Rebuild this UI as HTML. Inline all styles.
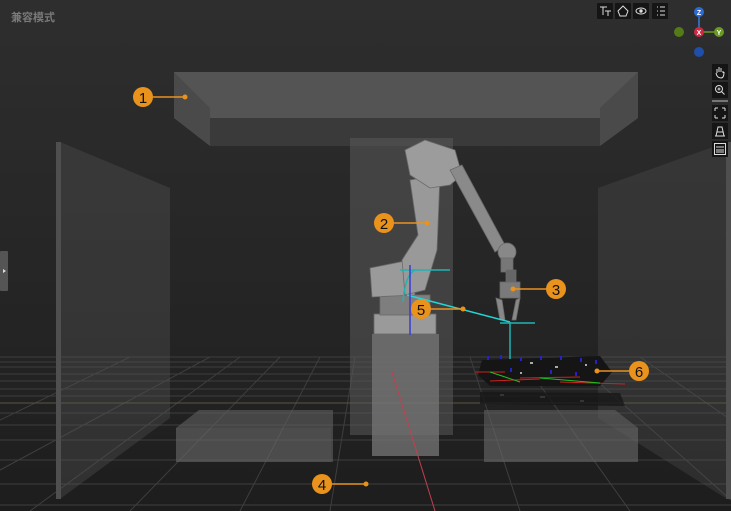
<!DOCTYPE html>
<html><head><meta charset="utf-8"><style>
html,body{margin:0;padding:0;width:731px;height:511px;overflow:hidden;background:#262626}
svg{display:block}
.t{font-family:"Liberation Sans","Noto Sans CJK SC",sans-serif}
</style></head><body>
<svg width="731" height="511" viewBox="0 0 731 511" xmlns="http://www.w3.org/2000/svg">
<defs>
<linearGradient id="bg" x1="0" y1="0" x2="0" y2="1">
<stop offset="0" stop-color="#2e2e2e"/><stop offset="0.7" stop-color="#232323"/><stop offset="1" stop-color="#1d1d1d"/>
</linearGradient>
</defs>
<rect width="731" height="511" fill="url(#bg)"/>
<!-- floor grid -->
<g stroke="#3e3e3e" stroke-width="1" fill="none">
<line x1="0" y1="357" x2="731" y2="357"/><line x1="0" y1="362" x2="731" y2="362"/>
<line x1="0" y1="367" x2="731" y2="367"/><line x1="0" y1="374" x2="731" y2="374"/>
<line x1="0" y1="381" x2="731" y2="381"/><line x1="0" y1="389" x2="731" y2="389"/>
<line x1="0" y1="396" x2="731" y2="396"/><line x1="0" y1="413" x2="731" y2="413"/>
<line x1="0" y1="425" x2="731" y2="425"/><line x1="0" y1="440" x2="731" y2="440"/>
<line x1="0" y1="460" x2="731" y2="460"/><line x1="0" y1="484" x2="731" y2="484"/>
<line x1="0" y1="505" x2="731" y2="505"/>
<line x1="0" y1="470" x2="210" y2="357"/><line x1="30" y1="511" x2="240" y2="357"/>
<line x1="0" y1="420" x2="130" y2="357"/><line x1="130" y1="511" x2="280" y2="357"/>
<line x1="240" y1="511" x2="320" y2="357"/><line x1="330" y1="511" x2="355" y2="357"/>
<line x1="520" y1="511" x2="470" y2="357"/><line x1="630" y1="511" x2="520" y2="357"/>
<line x1="731" y1="500" x2="570" y2="357"/><line x1="731" y1="420" x2="640" y2="357"/>
</g>
<line x1="0" y1="403" x2="731" y2="403" stroke="#5a5640" stroke-width="1"/>
<!-- left wall -->
<polygon points="60,142 170,188 170,418 60,499" fill="#555" opacity="0.35"/>
<rect x="56" y="142" width="5" height="357" fill="#4f4f4f"/>
<!-- right wall -->
<polygon points="598,188 727,142 727,499 598,418" fill="#555" opacity="0.3"/>
<rect x="726" y="142" width="5" height="357" fill="#4f4f4f"/>
<!-- top beam -->
<polygon points="174,72 638,72 638,118 600,146 210,146 174,118" fill="#3a3a3b"/>
<rect x="174" y="72" width="464" height="46" fill="#545454"/>
<polygon points="174,72 210,108 210,146 174,118" fill="#4a4a4a"/>
<polygon points="638,72 600,108 600,146 638,118" fill="#4a4a4a"/>
<!-- center pillar -->
<rect x="350" y="138" width="103" height="297" fill="#5a5a5a" opacity="0.55"/>
<!-- floor boxes -->
<g opacity="0.6">
<polygon points="176,428 199,410 333,410 333,462 176,462" fill="#606060"/>
<rect x="176" y="428" width="155" height="34" fill="#6a6a6a"/>
<polygon points="484,410 615,410 638,428 638,462 484,462" fill="#606060"/>
<rect x="484" y="428" width="154" height="34" fill="#6a6a6a"/>
</g>
<!-- robot base pillar -->
<rect x="372" y="334" width="67" height="122" fill="#777" opacity="0.75"/>
<!-- robot -->
<g fill="#8e8e8e" stroke="#6a6a6a" stroke-width="0.8">
<rect x="374" y="314" width="62" height="20" fill="#9a9a9a"/>
<rect x="380" y="295" width="50" height="20" fill="#7e7e7e"/>
<polygon points="370,268 410,260 415,295 372,297" fill="#9a9a9a"/>
<polygon points="410,180 440,175 437,250 425,290 405,295 402,260 418,235" fill="#999"/>
<polygon points="405,150 425,140 455,150 462,175 450,185 430,188 410,175" fill="#9c9c9c"/>
<polygon points="450,170 462,165 505,245 495,252" fill="#8a8a8a"/>
<circle cx="507" cy="252" r="9" fill="#888"/>
<rect x="501" y="258" width="12" height="14" fill="#777"/>
<rect x="500" y="282" width="20" height="16" fill="#7a7a7a"/>
<rect x="506" y="270" width="10" height="12" fill="#666"/>
<polygon points="496,298 500,320 505,320 502,300" fill="#888"/>
<polygon points="520,298 516,320 512,320 516,300" fill="#888"/>
</g>
<!-- trajectory -->
<g fill="none" stroke-width="1.5">
<path d="M403,302 Q405,275 415,270" stroke="#1eb3b3"/>
<line x1="400" y1="270" x2="450" y2="270" stroke="#1eb3b3"/>
<line x1="407" y1="295" x2="510" y2="322" stroke="#25d6d6"/>
<line x1="510" y1="322" x2="510" y2="368" stroke="#1eb3b3"/>
<line x1="500" y1="323" x2="535" y2="323" stroke="#1eb3b3"/>
<line x1="410" y1="265" x2="410" y2="335" stroke="#3a3ad0"/>
<line x1="392" y1="372" x2="435" y2="511" stroke="#c04050" stroke-width="1"/>
</g>
<!-- point cloud -->
<g>
<polygon points="482,360 600,356 612,372 600,386 490,386 478,375" fill="#151515"/>
<g fill="#2323c8"><rect x="487" y="356" width="2" height="4"/><rect x="500" y="355" width="2" height="4"/><rect x="520" y="357" width="2" height="4"/><rect x="540" y="356" width="2" height="4"/><rect x="560" y="356" width="2" height="4"/><rect x="580" y="358" width="2" height="4"/><rect x="595" y="360" width="2" height="4"/><rect x="510" y="368" width="2" height="4"/><rect x="550" y="370" width="2" height="4"/><rect x="575" y="372" width="2" height="4"/></g>
<g stroke="#d02020" stroke-width="1"><line x1="475" y1="372" x2="505" y2="372"/><line x1="490" y1="381" x2="540" y2="379"/><line x1="560" y1="382" x2="625" y2="384"/><line x1="520" y1="378" x2="580" y2="377"/></g>
<g stroke="#20c020" stroke-width="1"><line x1="490" y1="372" x2="520" y2="382"/><line x1="540" y1="378" x2="600" y2="383"/></g>
<g fill="#aaa"><rect x="530" y="362" width="3" height="2"/><rect x="555" y="366" width="3" height="2"/><rect x="585" y="364" width="2" height="2"/><rect x="520" y="372" width="2" height="2"/><rect x="500" y="394" width="4" height="2"/><rect x="540" y="396" width="5" height="2"/><rect x="580" y="400" width="4" height="2"/></g>
<polygon points="480,392 620,393 625,406 480,404" fill="#181818" opacity="0.8"/>
</g>
<!-- markers -->
<g stroke="#e9921c" stroke-width="1.5">
<line x1="150" y1="97" x2="185" y2="97"/><line x1="390" y1="223" x2="427" y2="223"/>
<line x1="513" y1="289" x2="550" y2="289"/><line x1="328" y1="484" x2="366" y2="484"/>
<line x1="427" y1="309" x2="463" y2="309"/><line x1="597" y1="371" x2="633" y2="371"/>
</g>
<g fill="#e9921c">
<circle cx="185" cy="97" r="2.5"/><circle cx="427" cy="223" r="2.5"/><circle cx="513" cy="289" r="2.5"/><circle cx="366" cy="484" r="2.5"/><circle cx="463" cy="309" r="2.5"/><circle cx="597" cy="371" r="2.5"/>
<circle cx="143" cy="97" r="10"/><circle cx="384" cy="223" r="10"/><circle cx="556" cy="289" r="10"/><circle cx="322" cy="484" r="10"/><circle cx="421" cy="309" r="10"/><circle cx="639" cy="371" r="10"/>
</g>
<g class="t" font-size="15" fill="#111" text-anchor="middle">
<text x="143" y="103">1</text><text x="384" y="229">2</text><text x="556" y="295">3</text><text x="322" y="490">4</text><text x="421" y="315">5</text><text x="639" y="377">6</text>
</g>
<!-- title -->
<text class="t" x="11" y="21" font-size="11" font-weight="bold" fill="#7a7a7a">兼容模式</text>
<!-- left tab -->
<rect x="0" y="251" width="8" height="40" fill="#555" rx="1"/>
<polygon points="3,269 6,271 3,273" fill="#ddd"/>
<!-- top toolbar -->
<g fill="#151515"><rect x="597" y="3" width="16" height="16" rx="1"/><rect x="615" y="3" width="16" height="16" rx="1"/><rect x="633" y="3" width="16" height="16" rx="1"/><rect x="652" y="3" width="16" height="16" rx="1"/></g>
<g stroke="#ddd" stroke-width="1" fill="none">
<path d="M600,7h7M603,7v8M605,11h6M608,11v5"/>
<path d="M623,6l5,5l-2,5h-6l-2,-5z"/>
<ellipse cx="641" cy="11" rx="5" ry="3"/><circle cx="641" cy="11" r="1.2" fill="#ddd"/>
<path d="M657,7h1M660,7h5M657,11h1M660,11h5M657,15h1M660,15h5"/>
</g>
<!-- gizmo -->
<line x1="699" y1="12" x2="699" y2="32" stroke="#3a7ad8" stroke-width="1.5"/>
<line x1="699" y1="32" x2="719" y2="32" stroke="#6a9a20" stroke-width="1.5"/>
<circle cx="699" cy="12" r="5" fill="#2a6bd8"/><circle cx="699" cy="32" r="5" fill="#d02840"/><circle cx="719" cy="32" r="5" fill="#6a9a20"/>
<circle cx="679" cy="32" r="5" fill="#557a18"/><circle cx="699" cy="52" r="5" fill="#1f4fa8"/>
<g class="t" font-size="7" font-weight="bold" fill="#fff" text-anchor="middle"><text x="699" y="15">Z</text><text x="699" y="35">X</text><text x="719" y="35">Y</text></g>
<!-- right toolbar -->
<g fill="#151515"><rect x="712" y="64" width="16" height="16"/><rect x="712" y="82" width="16" height="16"/><rect x="712" y="105" width="16" height="16"/><rect x="712" y="123" width="16" height="16"/><rect x="712" y="141" width="16" height="16"/></g>
<rect x="712" y="100" width="16" height="2" fill="#777"/>
<g stroke="#ddd" stroke-width="1" fill="none">
<path d="M717,73v-4M719,72v-5M721,72v-4M723,73v-2M716,73q1,5 5,5q3,0 3,-6"/>
<circle cx="719" cy="89" r="3.5"/><path d="M721.5,91.5l3,3M717.5,89h3M719,87.5v3"/>
<path d="M715,108h3M715,108v3M725,108h-3M725,108v3M715,118h3M715,118v-3M725,118h-3M725,118v-3"/>
<path d="M716,136l2,-9h4l2,9zM715,136h10M717,132h6"/>
<rect x="714.5" y="143.5" width="11" height="11"/><path d="M716,147h8M716,150h8M716,152h8"/>
</g>
</svg>
</body></html>
